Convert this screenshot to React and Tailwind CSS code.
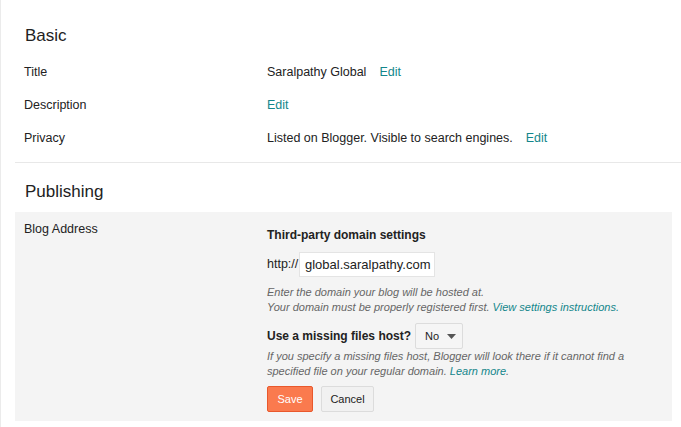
export default function App() {
  return (
    <div className="w-[681px] h-[427px] bg-white overflow-hidden border-l border-[#ebebeb] pl-[14px] text-[#222] [font-family:'Liberation_Sans',Arial,sans-serif] text-[12.5px]">
      <div className="pl-[10px] mt-[25px] text-[17px] leading-[22px] text-[#222]">Basic</div>
      <div className="mt-[9px]">
        <div className="flex h-[33px] items-center">
          <div className="w-[252px] pl-[9px]">Title</div>
          <div>Saralpathy Global<span className="ml-[13px] text-[#13868b]">Edit</span></div>
        </div>
        <div className="flex h-[33px] items-center">
          <div className="w-[252px] pl-[9px]">Description</div>
          <div className="text-[#13868b]">Edit</div>
        </div>
        <div className="flex h-[33px] items-center">
          <div className="w-[252px] pl-[9px]">Privacy</div>
          <div>Listed on Blogger. Visible to search engines.<span className="ml-[13px] text-[#13868b]">Edit</span></div>
        </div>
      </div>
      <div className="mt-[7px] border-t border-[#e8e8e8]"></div>
      <div className="pl-[10px] mt-[18px] text-[17px] leading-[22px] text-[#222]">Publishing</div>
      <div className="mt-[9px] w-[657px] bg-[#f4f4f4] flex pb-[9px]">
        <div className="w-[252px] pl-[9px] pt-[9px] leading-[16px]">Blog Address</div>
        <div className="pt-[15px]">
          <div className="font-bold text-[12px] leading-[16px]">Third-party domain settings</div>
          <div className="mt-[9px] flex items-center">
            <span className="w-[32px]">http://</span>
            <div className="w-[136px] h-[25px] bg-white border border-[#e4e4e4] flex items-center px-[5px] text-[13px]">global.saralpathy.com</div>
          </div>
          <div className="mt-[8px] italic text-[11px] leading-[15px] text-[#666]">
            <div>Enter the domain your blog will be hosted at.</div>
            <div>Your domain must be properly registered first. <span className="text-[#13868b]">View settings instructions.</span></div>
          </div>
          <div className="mt-[8px] flex items-center">
            <span className="font-bold text-[12px] whitespace-nowrap mr-[4px]">Use a missing files host?</span>
            <div className="w-[48px] h-[26px] bg-[#f5f5f5] border border-[#dcdcdc] rounded-[2px] flex items-center pl-[9px] text-[11px]">
              No
              <svg className="ml-[8px]" width="9" height="5" viewBox="0 0 9 5"><path d="M0 0h9L4.5 5z" fill="#555" /></svg>
            </div>
          </div>
          <div className="italic text-[11px] leading-[15px] text-[#666]">
            <div>If you specify a missing files host, Blogger will look there if it cannot find a</div>
            <div>specified file on your regular domain. <span className="text-[#13868b]">Learn more</span>.</div>
          </div>
          <div className="mt-[7px] flex gap-[8px]">
            <button className="w-[46px] h-[26px] bg-[#fa7a4e] border border-[#e9582c] rounded-[2px] text-white text-[11px]">Save</button>
            <button className="w-[53px] h-[26px] bg-[#f1f1f1] border border-[#dcdcdc] rounded-[2px] text-[#222] text-[11px]">Cancel</button>
          </div>
        </div>
      </div>
    </div>
  );
}
